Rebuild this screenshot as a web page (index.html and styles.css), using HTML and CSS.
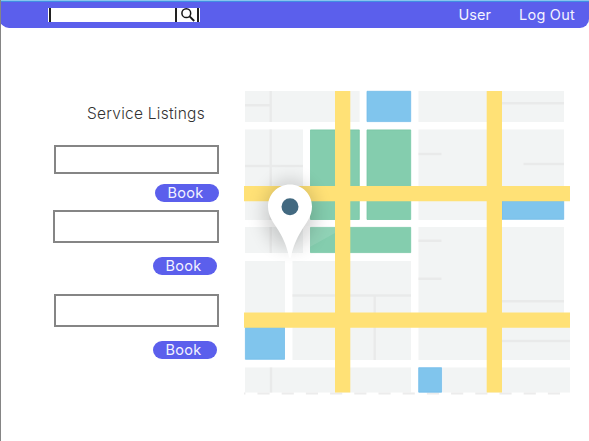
FILE: index.html
```html
<!DOCTYPE html>
<html lang="en">
<head>
<meta charset="utf-8">
<title>Service Listings</title>
<link rel="stylesheet" href="styles.css">
</head>
<body>
<div class="page">
  <header class="bar">
    <div class="search">
      <div class="field"></div>
      <div class="go">
        <svg width="16" height="14" viewBox="0 0 16 14" fill="none" stroke="#151515"><circle cx="5.3" cy="5.2" r="4.4" stroke-width="1.5"/><path d="M8.6 8.400L13.200 13" stroke-width="1.9"/></svg>
      </div>
    </div>
    <nav class="nav"><a class="user">User</a><a class="logout">Log Out</a></nav>
  </header>
  <main class="main">
    <section class="listings">
      <h1 class="title">Service Listings</h1>
      <div class="box first"></div>
      <button class="book">Book</button>
      <div class="box second"></div>
      <button class="book shifted gap">Book</button>
      <div class="box third"></div>
      <button class="book shifted gap">Book</button>
    </section>
    <svg class="map" width="328" height="306" viewBox="244 90 328 306">
      <defs>
        <filter id="soft" x="-50%" y="-50%" width="200%" height="200%"><feGaussianBlur stdDeviation="9"/></filter>
        <clipPath id="area"><rect x="245" y="129" width="102" height="135"/></clipPath>
      </defs>
      <g fill="#f2f4f4">
        <path d="M245 91H359.6V122H245zM418.500 91H564V122H418.500zM245 129.500H303V220H245zM245 227H303V253H245zM418.500 129.500H564V220H418.500zM418.500 227H564V313H418.500zM245 261H285V313H245zM292.500 261H411V360H292.500zM418.500 320H570V360H418.500zM245 367.500H411V392.500H245zM442.500 367.500H570V392.500H442.500z"/>
      </g>
      <g stroke="#e9eaea" stroke-width="2.400" fill="none">
        <path d="M270.700 91V122M245 105.300H270M270.700 129.500V220M270.700 227V253M245 166H303M418.500 154H441.500M502 103.300H564M523.500 164H564M418.500 240.700H441.500M418.500 278.700H441.500M292.500 295.500H411M374.700 295.500V360M502 301.300H564M502 341H570M271 367.500V392.500"/>
      </g>
      <path d="M244 393.600H570" stroke="#ececec" stroke-width="2" stroke-dasharray="12.100 12.100" stroke-dashoffset="10.700" fill="none"/>
      <path fill="#84cdae" stroke="#76c6a4" stroke-width=".8" d="M310.500 129.900H359.300V219.500H310.500zM367 129.900H410.700V219.500H367zM310.500 227.400H410.700V252.600H310.500z"/>
      <path fill="#80c5ed" stroke="#73bdea" stroke-width=".8" d="M367 91.300H410.700V121.600H367zM502 201H563.700V219.300H502zM245.400 327H284.500V359.300H245.400zM418.700 367.700H441.600V392.200H418.700z"/>
      <path fill="#ffe176" d="M244 186H570V201.300H244zM244 312.500H570V327.800H244zM335 91H350.300V392.500H335zM486.700 91H502V392.500H486.700z"/>
      <g clip-path="url(#area)">
        <ellipse cx="290" cy="214" rx="26" ry="34" fill="#000" opacity=".17" filter="url(#soft)"/>
        <path d="M290 258L335 233V224L305 226z" fill="#fff" opacity=".1"/>
      </g>
      <path fill="#fff" d="M290 184.500C277.500 184.500 268 194.300 268 206.500C268 216 273.500 222.500 278.500 230.500C284 239.500 287 247 289 257Q290 260 291 257C293 247 296 239.500 301.500 230.500C306.500 222.500 312 216 312 206.500C312 194.300 302.500 184.500 290 184.500z"/>
      <circle cx="290" cy="206.800" r="8.500" fill="#426980"/>
    </svg>
  </main>
</div>
</body>
</html>
```
FILE: styles.css
```css
* { box-sizing: border-box; }
body {
  margin: 0;
  background: #fff;
  font-family: Inter, "Liberation Sans", sans-serif;
}
.page {
  height: 441px;
  overflow: hidden;
  border-left: 1px solid #858585;
}
.bar {
  display: flex;
  align-items: flex-start;
  height: 28px;
  margin-left: -1px;
  padding-left: 48px;
  background: #5b5fec;
  border-top: 1px solid #88c5ee;
  border-radius: 0 0 9px 9px;
  box-shadow: inset 0 1px #408fe3;
}
.search {
  display: flex;
  width: 152px;
  height: 14px;
  margin-top: 7px;
  padding: 0 1px;
  background: #fff;
}
.field {
  width: 128px;
  border: solid #222;
  border-width: 0 2px;
}
.go {
  display: flex;
  width: 22px;
  padding-left: 4px;
  border-right: 2px solid #222;
}
.nav {
  display: flex;
  margin-top: 4px;
  color: #f3f3ff;
  font-size: 14.500px;
  line-height: 20px;
  white-space: nowrap;
}
.user { width: 60.500px; margin-left: 258.500px; letter-spacing: 0; }
.logout { letter-spacing: .25px; }
.main { display: flex; }
.listings {
  display: flex;
  flex-direction: column;
  align-items: flex-end;
  width: 218px;
  padding-top: 76px;
}
.title {
  width: 132px;
  margin: 0;
  color: #333;
  font-size: 15.500px;
  font-weight: 300;
  line-height: 20px;
  letter-spacing: .25px;
  white-space: nowrap;
}
.box {
  width: 165px;
  border: 2px solid #858585;
}
.first { height: 29px; margin-top: 21px; }
.second { width: 166px; height: 33px; margin-top: 8px; }
.third { height: 33px; margin-top: 19px; }
.book {
  width: 64px;
  height: 18px;
  margin: 10px 0 0;
  padding: 0 3px 0 0;
  border: 0;
  border-radius: 9px;
  background: #5b5fec;
  color: #f3f3ff;
  font: 14.500px/18px Inter, "Liberation Sans", sans-serif;
  letter-spacing: .25px;
}
.shifted { margin-right: 2px; }
.gap { margin-top: 14px; }
.map { display: block; margin: 62px 0 0 25px; }
```
